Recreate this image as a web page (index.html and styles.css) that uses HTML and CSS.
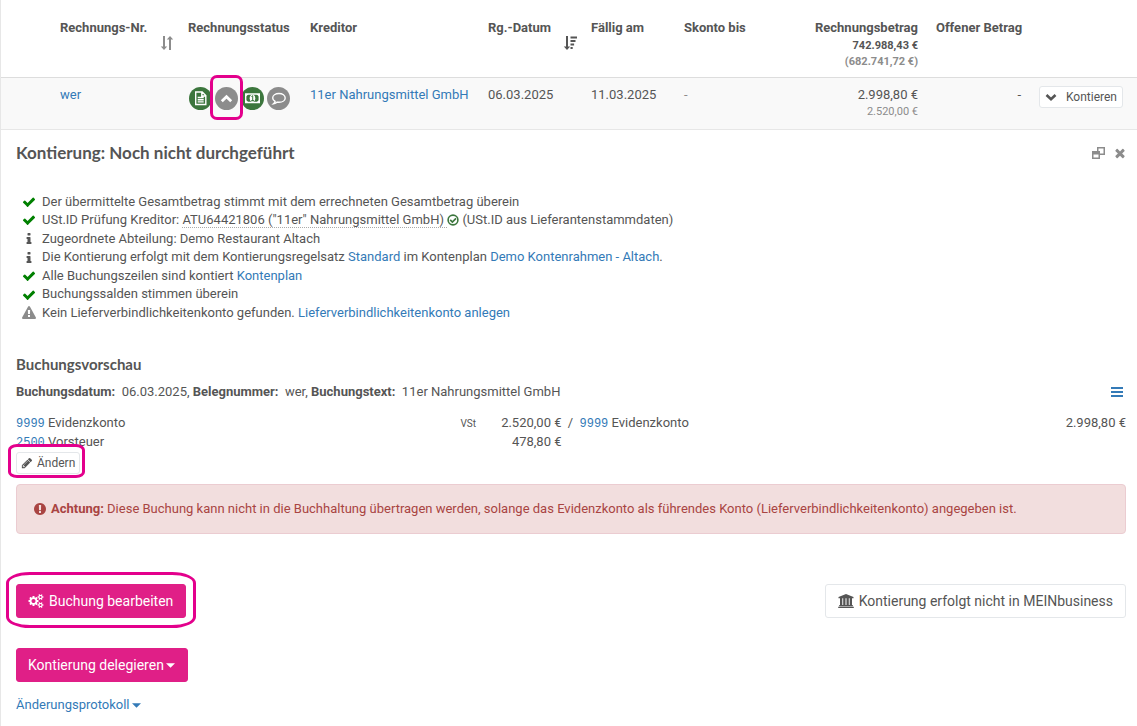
FILE: index.html
```html
<!DOCTYPE html>
<html lang="de">
<head>
<meta charset="utf-8">
<meta name="viewport" content="width=device-width, initial-scale=1">
<title>Kontierung</title>
<link rel="stylesheet" href="styles.css">
</head>
<body>
<svg class="sprite" aria-hidden="true">
  <symbol id="check" viewBox="0 0 1792 1792"><path d="M1671 566q0 40-28 68l-724 724-136 136q-28 28-68 28t-68-28l-136-136-362-362q-28-28-28-68t28-68l136-136q28-28 68-28t68 28l294 295 656-657q28-28 68-28t68 28l136 136q28 28 28 68z"/></symbol>
  <symbol id="info" viewBox="0 0 1792 1792"><path d="M1216 1344v128q0 26-19 45t-45 19h-512q-26 0-45-19t-19-45v-128q0-26 19-45t45-19h64v-384h-64q-26 0-45-19t-19-45v-128q0-26 19-45t45-19h384q26 0 45 19t19 45v576h64q26 0 45 19t19 45zm-128-1152v192q0 26-19 45t-45 19h-256q-26 0-45-19t-19-45v-192q0-26 19-45t45-19h256q26 0 45 19t19 45z"/></symbol>
  <symbol id="warning" viewBox="0 0 1792 1792"><path d="M1024 1375v-190q0-14-9.500-23.500t-22.500-9.500h-192q-13 0-22.500 9.500t-9.500 23.500v190q0 14 9.500 23.500t22.500 9.500h192q13 0 22.500-9.500t9.500-23.500zm-2-374l18-459q0-12-10-19-13-11-24-11h-220q-11 0-24 11-10 7-10 21l17 457q0 10 10 16.500t24 6.500h185q14 0 23.500-6.500t10.500-16.500zm-14-934l768 1408q35 63-2 126-17 29-46.500 46t-63.500 17h-1536q-34 0-63.500-17t-46.500-46q-37-63-2-126l768-1408q17-31 47-49t65-18 65 18 47 49z"/></symbol>
  <symbol id="alert" viewBox="0 0 1792 1792"><path d="M896 128q209 0 385.500 103t279.500 279.500 103 385.500-103 385.500-279.500 279.500-385.500 103-385.500-103-279.500-279.500-103-385.500 103-385.500 279.500-279.500 385.500-103zm128 1247v-190q0-14-9-23.500t-22-9.500h-192q-13 0-23 10t-10 23v190q0 13 10 23t23 10h192q13 0 22-9.500t9-23.500zm-2-344l18-621q0-12-10-18-10-8-24-8h-220q-14 0-24 8-10 6-10 18l17 621q0 10 10 17.500t24 7.500h185q14 0 23.500-7.500t10.500-17.500z"/></symbol>
  <symbol id="close" viewBox="0 0 1792 1792"><path d="M1490 1322q0 40-28 68l-136 136q-28 28-68 28t-68-28l-294-294-294 294q-28 28-68 28t-68-28l-136-136q-28-28-28-68t28-68l294-294-294-294q-28-28-28-68t28-68l136-136q28-28 68-28t68 28l294 294 294-294q28-28 68-28t68 28l136 136q28 28 28 68t-28 68l-294 294 294 294q28 28 28 68z"/></symbol>
  <symbol id="pencil" viewBox="0 0 1792 1792"><path d="M491 1536l91-91-235-235-91 91v107h128v128h107zm523-928q0-22-22-22-10 0-17 7l-542 542q-7 7-7 17 0 22 22 22 10 0 17-7l542-542q7-7 7-17zm-54-192l416 416-832 832h-416v-416zm683 96q0 53-37 90l-166 166-416-416 166-165q36-38 90-38 53 0 91 38l235 234q37 39 37 91z"/></symbol>
  <symbol id="cogs" viewBox="0 0 1920 1792"><path d="M896 896q0-106-75-181t-181-75-181 75-75 181 75 181 181 75 181-75 75-181zm768 512q0-52-38-90t-90-38-90 38-38 90q0 53 37.500 90.500t90.500 37.500 90.500-37.500 37.500-90.500zm0-1024q0-52-38-90t-90-38-90 38-38 90q0 53 37.500 90.500t90.500 37.500 90.500-37.500 37.500-90.500zm-384 421v185q0 10-7 19.500t-16 10.500l-155 24q-11 35-32 76 34 48 90 115 7 11 7 20 0 12-7 19-23 30-82.500 89.500t-78.500 59.500q-11 0-21-7l-115-90q-37 19-77 31-11 108-23 155-7 24-30 24h-186q-11 0-20-7.500t-10-17.500l-23-153q-34-10-75-31l-118 89q-7 7-20 7-11 0-21-8-144-133-144-160 0-9 7-19 10-14 41-53t47-61q-23-44-35-82l-152-24q-10-1-17-9.500t-7-19.500v-185q0-10 7-19.500t16-10.500l155-24q11-35 32-76-34-48-90-115-7-11-7-20 0-12 7-20 22-30 82-89t79-59q11 0 21 7l115 90q34-18 77-32 11-108 23-154 7-24 30-24h186q11 0 20 7.500t10 17.500l23 153q34 10 75 31l118-89q8-7 20-7 11 0 21 8 144 133 144 160 0 8-7 19-12 16-42 54t-45 60q23 48 34 82l152 23q10 2 17 10.500t7 19.500zm640 533v140q0 16-149 31-12 27-30 52 51 113 51 138 0 4-4 7-122 71-124 71-8 0-46-47t-52-68q-20 2-30 2t-30-2q-14 21-52 68t-46 47q-2 0-124-71-4-3-4-7 0-25 51-138-18-25-30-52-149-15-149-31v-140q0-16 149-31 13-29 30-52-51-113-51-138 0-4 4-7 4-2 35-20t59-34 30-16q8 0 46 46.500t52 67.500q20-2 30-2t30 2q51-71 92-112l6-2q4 0 124 70 4 3 4 7 0 25-51 138 17 23 30 52 149 15 149 31zm0-1024v140q0 16-149 31-12 27-30 52 51 113 51 138 0 4-4 7-122 71-124 71-8 0-46-47t-52-68q-20 2-30 2t-30-2q-14 21-52 68t-46 47q-2 0-124-71-4-3-4-7 0-25 51-138-18-25-30-52-149-15-149-31v-140q0-16 149-31 13-29 30-52-51-113-51-138 0-4 4-7 4-2 35-20t59-34 30-16q8 0 46 46.500t52 67.500q20-2 30-2t30 2q51-71 92-112l6-2q4 0 124 70 4 3 4 7 0 25-51 138 17 23 30 52 149 15 149 31z"/></symbol>
  <symbol id="chevron" viewBox="0 0 12 12"><path d="M1.500 4l4.500 4.200L10.500 4" fill="none" stroke="currentColor" stroke-width="2.600"/></symbol>
  <symbol id="caret" viewBox="0 0 8 4"><path d="M0 0h8L4 4z"/></symbol>
  <symbol id="sort" viewBox="0 0 14 14"><path d="M3 0h2v10.500h2.200L4 14 .800 10.500H3zM9 14h2V3.500h2.200L10 0 6.800 3.500H9z"/></symbol>
  <symbol id="sort-desc" viewBox="0 0 14 14"><path d="M3 0h2v10.500h2.200L4 14 .800 10.500H3zM7.500 .500H14v2H7.500zM7.500 4h5v2h-5zM7.500 7.500h3.600v2H7.500zM7.500 11h2.200v2H7.500z"/></symbol>
  <symbol id="ok-circle" viewBox="0 0 12 12"><circle cx="6" cy="6" r="4.900" fill="none" stroke="currentColor" stroke-width="1.600"/><path d="M3.200 5.800l2.200 2.200 3.600-3.700" fill="none" stroke="currentColor" stroke-width="1.700"/></symbol>
  <symbol id="bars" viewBox="0 0 12 10"><path d="M0 0h12v2H0zM0 4h12v2H0zM0 8h12v2H0z"/></symbol>
  <symbol id="windows" viewBox="0 0 13 12"><path fill-rule="evenodd" d="M5 0h8v8H8V6.500h3.500v-5h-5V4H5zM0 4h8v8H0zM1.500 7.500v3h5v-3z"/></symbol>
  <symbol id="bank" viewBox="0 0 16 14"><path d="M8 0l7.500 3v1.200H.500V3zM2 4.200h2.300V11H2zM5.200 4.200h2.300V11H5.200zM8.500 4.200h2.300V11H8.500zM11.700 4.200H14V11h-2.300zM1.200 11h13.600v1.200H1.200zM.200 12.800h15.600V14H.200z"/></symbol>
</svg>

<main class="page">
  <table class="invoices">
    <colgroup><col class="c-pad"><col class="c-nr"><col class="c-status"><col><col class="c-date"><col class="c-due"><col class="c-skonto"><col class="c-sum"><col class="c-open"><col class="c-action"></colgroup>
    <thead>
      <tr>
        <th></th>
        <th>Rechnungs-Nr.<svg class="sort muted"><use href="#sort"/></svg></th>
        <th>Rechnungsstatus</th>
        <th>Kreditor</th>
        <th>Rg.-Datum<svg class="sort"><use href="#sort-desc"/></svg></th>
        <th>Fällig am</th>
        <th>Skonto bis</th>
        <th class="num">Rechnungsbetrag<small>742.988,43 €</small><small class="muted">(682.741,72 €)</small></th>
        <th class="num">Offener Betrag</th>
        <th></th>
      </tr>
    </thead>
    <tbody>
      <tr>
        <td></td>
        <td><a href="#">wer</a></td>
        <td>
          <div class="badges">
            <svg class="badge green" viewBox="0 0 23 23"><circle cx="11.500" cy="11.500" r="11.500"/><path class="line" d="M6.700 5h6.500l3.600 3.600V17.500H6.700zM12.800 5v4h4M8.700 10.500h6M8.700 12.700h6M8.700 14.900h6"/></svg>
            <span class="mark mark-status"><svg class="badge gray" viewBox="0 0 23 23"><circle cx="11.500" cy="11.500" r="11.500"/><path class="bold-line" d="M6.800 14.300l4.700-4.500 4.700 4.500"/></svg></span>
            <svg class="badge green" viewBox="0 0 23 23"><circle cx="11.500" cy="11.500" r="11.500"/><path class="line" d="M4.700 7h13.600v8.500H4.700z"/><path class="white" d="M4.700 7h3L4.700 9.800zM18.300 7h-3l3 2.800zM4.700 15.500h3l-3-2.800zM18.300 15.500h-3l3-2.800z"/><ellipse class="white" cx="11.500" cy="11.250" rx="2.800" ry="3.600"/><path class="ink" d="M10.400 9.600l1.300-.900v4.600M10.300 13.500h2.600"/></svg>
            <svg class="badge gray" viewBox="0 0 23 23"><circle cx="11.500" cy="11.500" r="11.500"/><path class="line" d="M12 6.500c-3.600 0-6.300 1.900-6.300 4.400 0 1.500 1 2.700 2.400 3.500-.200 1-.800 1.700-1.600 2.400 1.700-.200 2.900-.800 3.800-1.700.600.100 1.100.100 1.700.100 3.600 0 6.200-1.900 6.200-4.300S15.600 6.500 12 6.500z"/></svg>
          </div>
        </td>
        <td><a href="#">11er Nahrungsmittel GmbH</a></td>
        <td>06.03.2025</td>
        <td>11.03.2025</td>
        <td class="muted">-</td>
        <td class="num">2.998,80 €<small class="muted">2.520,00 €</small></td>
        <td class="num">-</td>
        <td><button type="button" class="btn btn-xs btn-assign"><svg class="i12"><use href="#chevron"/></svg>Kontieren</button></td>
      </tr>
    </tbody>
  </table>

  <section class="panel">
    <header class="panel-head">
      <h2>Kontierung: Noch nicht durchgeführt</h2>
      <div class="tools">
        <button type="button" class="plain" aria-label="In neuem Fenster öffnen"><svg class="win"><use href="#windows"/></svg></button>
        <button type="button" class="plain" aria-label="Schließen"><svg class="i14"><use href="#close"/></svg></button>
      </div>
    </header>

    <ul class="checks">
      <li><svg class="i14 ok"><use href="#check"/></svg><span>Der übermittelte Gesamtbetrag stimmt mit dem errechneten Gesamtbetrag überein</span></li>
      <li><svg class="i14 ok"><use href="#check"/></svg><span>USt.ID Prüfung Kreditor: <span class="hint">ATU64421806 ("11er" Nahrungsmittel GmbH)&nbsp;</span><svg class="verified"><use href="#ok-circle"/></svg> (USt.ID aus Lieferantenstammdaten)</span></li>
      <li><svg class="i14"><use href="#info"/></svg><span>Zugeordnete Abteilung: Demo Restaurant Altach</span></li>
      <li><svg class="i14"><use href="#info"/></svg><span>Die Kontierung erfolgt mit dem Kontierungsregelsatz <a href="#">Standard</a> im Kontenplan <a href="#">Demo Kontenrahmen - Altach</a>.</span></li>
      <li><svg class="i14 ok"><use href="#check"/></svg><span>Alle Buchungszeilen sind kontiert <a href="#">Kontenplan</a></span></li>
      <li><svg class="i14 ok"><use href="#check"/></svg><span>Buchungssalden stimmen überein</span></li>
      <li><svg class="i14 muted"><use href="#warning"/></svg><span>Kein Lieferverbindlichkeitenkonto gefunden. <a href="#">Lieferverbindlichkeitenkonto anlegen</a></span></li>
    </ul>

    <h3>Buchungsvorschau</h3>
    <div class="meta">
      <span><b>Buchungsdatum:</b>&nbsp; 06.03.2025, <b>Belegnummer:</b>&nbsp; wer, <b>Buchungstext:</b>&nbsp; 11er Nahrungsmittel GmbH</span>
      <button type="button" class="plain link" aria-label="Menü"><svg class="menu"><use href="#bars"/></svg></button>
    </div>

    <table class="postings">
      <colgroup><col><col class="p-tax"><col class="p-amount"><col class="p-slash"><col><col class="p-total"></colgroup>
      <tbody>
        <tr><td><a href="#" class="acct">9999</a> Evidenzkonto</td><td class="tax">VSt</td><td class="num">2.520,00 €</td><td class="slash">/</td><td><a href="#" class="acct">9999</a> Evidenzkonto</td><td class="num">2.998,80 €</td></tr>
        <tr><td><a href="#" class="acct">2500</a> Vorsteuer</td><td></td><td class="num">478,80 €</td><td></td><td></td><td></td></tr>
      </tbody>
    </table>
    <span class="mark mark-edit"><button type="button" class="btn btn-xs"><svg class="i12"><use href="#pencil"/></svg>Ändern</button></span>

    <div class="alert" role="alert"><svg class="i14"><use href="#alert"/></svg><span><b>Achtung:</b> Diese Buchung kann nicht in die Buchhaltung übertragen werden, solange das Evidenzkonto als führendes Konto (Lieferverbindlichkeitenkonto) angegeben ist.</span></div>

    <div class="actions">
      <span class="mark mark-process"><button type="button" class="btn btn-primary"><svg class="cogs"><use href="#cogs"/></svg>Buchung bearbeiten</button></span>
      <button type="button" class="btn"><svg class="bank"><use href="#bank"/></svg>Kontierung erfolgt nicht in MEINbusiness</button>
    </div>
    <button type="button" class="btn btn-primary btn-delegate">Kontierung delegieren<svg class="caret"><use href="#caret"/></svg></button>
    <div class="log"><a href="#">Änderungsprotokoll<svg class="caret"><use href="#caret"/></svg></a></div>
  </section>
</main>
</body>
</html>
```

FILE: styles.css
```css
* { box-sizing: border-box; }

body {
  margin: 0;
  background: #fff;
  color: #555;
  font: 13px/1.43 Roboto, "Liberation Sans", sans-serif;
}

a { color: #337ab7; text-decoration: none; }
b, th { font-weight: 700; }
svg { fill: currentColor; flex: none; }

.sprite { position: absolute; width: 0; height: 0; }
.page { border-left: 1px solid #e7e7e7; min-height: 100vh; }
.muted { color: #8c8c8c; }
.ok { color: #008000; }
.num { text-align: right; }
.i12 { width: 12px; height: 12px; }
.i14 { width: 14px; height: 14px; }

/* invoice list */
.invoices { width: 100%; table-layout: fixed; border-collapse: separate; border-spacing: 0; }
.c-pad { width: 50px; }
.c-nr { width: 128px; }
.c-status { width: 122px; }
.c-date, .c-open { width: 103px; }
.c-due { width: 93px; }
.c-skonto { width: 130px; }
.c-sum { width: 122px; }
.c-action { width: 107px; }
.invoices th, .invoices td { padding: 8px 9px 4px; vertical-align: top; text-align: left; white-space: nowrap; }
.invoices th { position: relative; padding: 19px 9px 7px; border-bottom: 1px solid #ddd; }
.invoices td { height: 52px; background: #f9f9f9; border-bottom: 1px solid #e7e7e7; }
.invoices .num { text-align: right; }
.invoices small { display: block; font-size: 11px; line-height: 16px; }
.sort { position: absolute; top: 36px; right: 5px; width: 14px; height: 14px; }

.badges { display: flex; gap: 3px; padding: 1px 0 0 1px; }
.badge { display: block; width: 23px; height: 23px; }
.green { fill: #3c763d; }
.gray { fill: #8c8c8c; }
.line, .bold-line { fill: none; stroke: #fff; stroke-width: 1.4; }
.bold-line { stroke-width: 2.8; }
.white { fill: #fff; }
.ink { fill: none; stroke: #3c763d; }

/* framed controls */
.mark { position: relative; display: inline-block; }
.mark::after { content: ""; position: absolute; border: 3px solid #e3008c; pointer-events: none; }
.mark-status::after { inset: -12px -5px -10px; border-radius: 7px; }
.mark-edit::after { inset: -8px -5px -3px -8px; border-radius: 9px / 6px; }
.mark-process::after { inset: -12px -10px -10px; border-radius: 24px / 11px; }

/* buttons */
.btn {
  display: inline-flex;
  align-items: center;
  gap: 5px;
  padding: 6px 12px;
  border: 1px solid #e4e7ea;
  border-radius: 3px;
  background: #fff;
  color: #555;
  font: 14px/20px Roboto, sans-serif;
}
.btn-xs { gap: 4px; padding: 1px 5px; font-size: 12px; line-height: 18px; }
.mark-edit .btn { padding: 1px 4px; }
.btn-assign { gap: 9px; }
.btn-primary { padding: 6px 12px 6px 11px; border-color: #e01f87; background: #e01f87; color: #fff; }
.plain { display: flex; padding: 0; border: 0; background: none; color: #8c8c8c; }
.link { color: #337ab7; }

/* posting panel */
.panel { padding: 11px 11px 10px 15px; }
.panel-head, .meta, .actions { display: flex; align-items: center; justify-content: space-between; }
h2, h3 { margin: 0; font-family: Lato, sans-serif; font-weight: 700; line-height: 24px; }
h2 { font-size: 17px; }
h3 { margin: 29px 0 7px; font-size: 15px; }
.tools { display: flex; align-items: center; gap: 8px; margin-right: -1px; }
.win { width: 13px; height: 12px; }

.checks { margin: 28px 0 0; padding: 0 0 0 6px; list-style: none; }
.checks li { display: flex; align-items: center; gap: 6px; }
.hint { border-bottom: 1px dotted #aaa; }
.verified { width: 12px; height: 12px; color: #3c763d; vertical-align: -2px; }

.meta { padding-right: 3px; }
.menu { width: 12px; height: 10px; }

.postings { width: 100%; margin-top: 13px; table-layout: fixed; border-collapse: collapse; }
.postings td { padding: 0; white-space: nowrap; }
.p-tax { width: 32px; }
.p-amount { width: 69px; }
.p-slash { width: 18px; }
.p-total { width: 102px; }
.slash { text-align: center; }
.tax { font-size: 10px; }
.acct { font: 12px/18px "Liberation Mono", monospace; }
.mark-edit { display: table; }

.alert {
  display: flex;
  align-items: center;
  gap: 4px;
  margin: 9px 0 50px;
  padding: 15px 16px;
  border: 1px solid #ebccd1;
  border-radius: 4px;
  background: #f2dede;
  color: #a94442;
}
.cogs { width: 16px; height: 14px; }
.bank { width: 16px; height: 14px; }
.btn-delegate { gap: 2px; margin: 30px 0 14px; }
.caret { width: 9px; height: 5px; }
.log a { display: inline-flex; align-items: center; gap: 2px; }
```
